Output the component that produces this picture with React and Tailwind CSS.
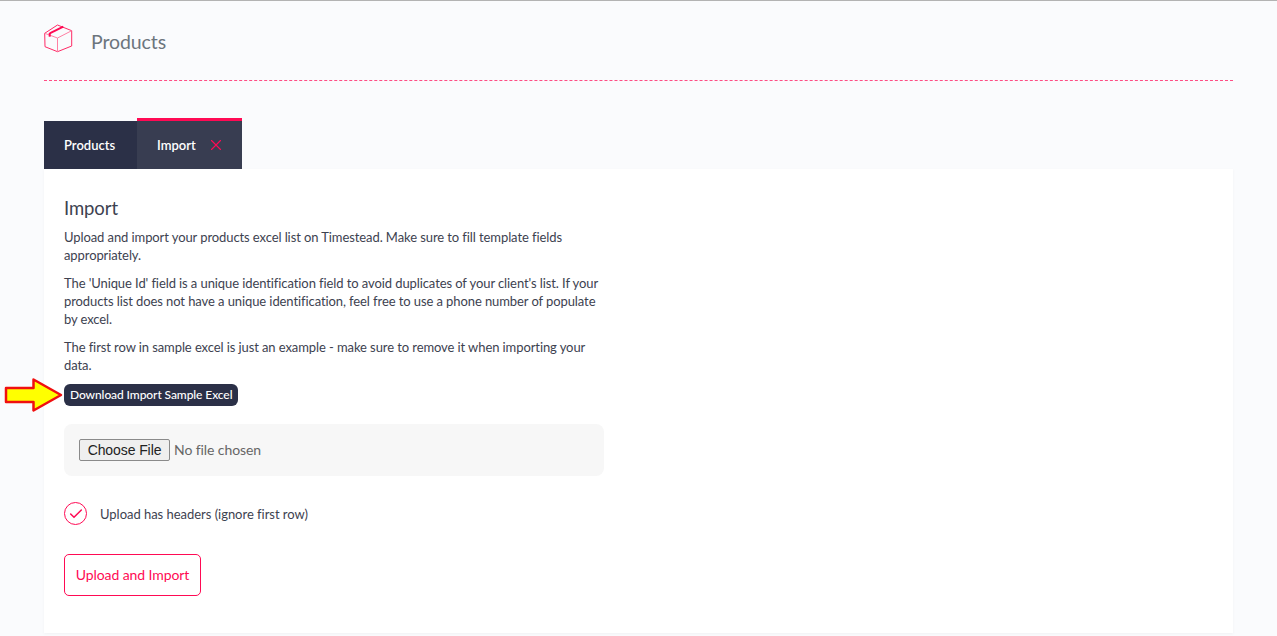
import { X, Check } from "lucide-react";

function BoxIcon() {
  return (
    <svg width="29" height="29" viewBox="0 0 29 29" fill="none" stroke="#ff2a66" strokeWidth="1" strokeLinejoin="round">
      <path d="M0.7 9.3 L13.5 1 L27.7 6.7 V22 L13.5 27.7 L1 22.7 Z" />
      <path d="M0.7 9.3 L13.5 14 L27.7 6.7 M13.5 14 V27.7" stroke="#ff7fa3" />
      <path d="M5.7 9.3 L19.3 2.7" strokeWidth="2" stroke="#ff0a54" />
      <path d="M5.7 9 V12.7" strokeWidth="2" stroke="#ff0a54" />
    </svg>
  );
}

function Arrow() {
  return (
    <svg className="absolute left-[-60px] top-[-7px]" width="60" height="36" viewBox="0 0 60 36">
      <path d="M2 11 H29.5 V2.5 L57 18 L29.5 33.5 V25 H2 Z" fill="#ffff00" stroke="#f01010" strokeWidth="2.5" strokeLinejoin="round" />
    </svg>
  );
}

export default function App() {
  return (
    <div className="min-h-[636px] overflow-hidden bg-[#fafbfd] border-t border-[#b3b3b3] font-['Lato',sans-serif] text-[13px] leading-[18px] tracking-[-0.09px] text-[#3d4250] px-11">
      <header className="flex h-[80px] border-b border-dashed border-b-[#ff4d85] pt-[23px]">
        <BoxIcon />
        <h1 className="ml-[18px] mt-[6px] text-[19.5px] leading-6 font-normal text-[#6c757d]">Products</h1>
      </header>

      <div className="mt-[37px] flex h-[51px] items-end text-white tracking-normal">
        <div className="flex h-12 w-[93px] items-center bg-[#2b3047] pl-5 text-[13px] font-semibold">Products</div>
        <div className="flex h-[51px] w-[105px] items-center gap-[11px] border-t-[3px] border-[#ff0a54] bg-[#383d51] pl-5 text-[13px] font-semibold">
          Import
          <X size={18} strokeWidth={1.5} className="text-[#ff0a54]" />
        </div>
      </div>

      <main className="h-[464px] bg-white px-5 pt-[27px] shadow-[0_1px_3px_rgba(0,0,0,0.04)]">
        <h2 className="text-[18.5px] leading-6 font-normal text-[#3d4250]">Import</h2>
        <div className="w-[540px]">
          <p className="mt-2">Upload and import your products excel list on Timestead. Make sure to fill template fields appropriately.</p>
          <p className="mt-[10px]">The 'Unique Id' field is a unique identification field to avoid duplicates of your client's list. If your products list does not have a unique identification, feel free to use a phone number of populate by excel.</p>
          <p className="mt-[10px]">The first row in sample excel is just an example - make sure to remove it when importing your data.</p>
        </div>
        <div className="relative mt-[10px] w-fit">
          <Arrow />
          <button className="relative block h-[22px] rounded-md bg-[#2b3047] px-[6px] text-[12px] leading-[22px] font-medium text-white">Download Import Sample Excel</button>
        </div>
        <div className="mt-[18px] flex h-[52px] w-[540px] items-center rounded-lg bg-[#f7f7f7] px-[15px]">
          <input
            type="file"
            className="text-[14px] text-[#666] file:mr-1 file:h-[22px] file:w-[91px] file:rounded-[2px] file:border file:border-[#8a8a8a] file:bg-[#efefef] file:font-['Liberation_Sans',sans-serif] file:text-[14px] file:text-[#222]"
          />
        </div>
        <label className="mt-[26px] flex items-center gap-[13px] tracking-[-0.03px]">
          <span className="flex h-[23px] w-[23px] items-center justify-center rounded-full border-[1.5px] border-[#ff0a54]">
            <Check size={16} strokeWidth={2.25} className="text-[#ff0a54]" />
          </span>
          Upload has headers (ignore first row)
        </label>
        <button className="mt-[29px] block h-[42px] w-[137px] rounded-[5px] border border-[#ff0a54] text-[14px] text-[#ff0a54]">Upload and Import</button>
      </main>
    </div>
  );
}
